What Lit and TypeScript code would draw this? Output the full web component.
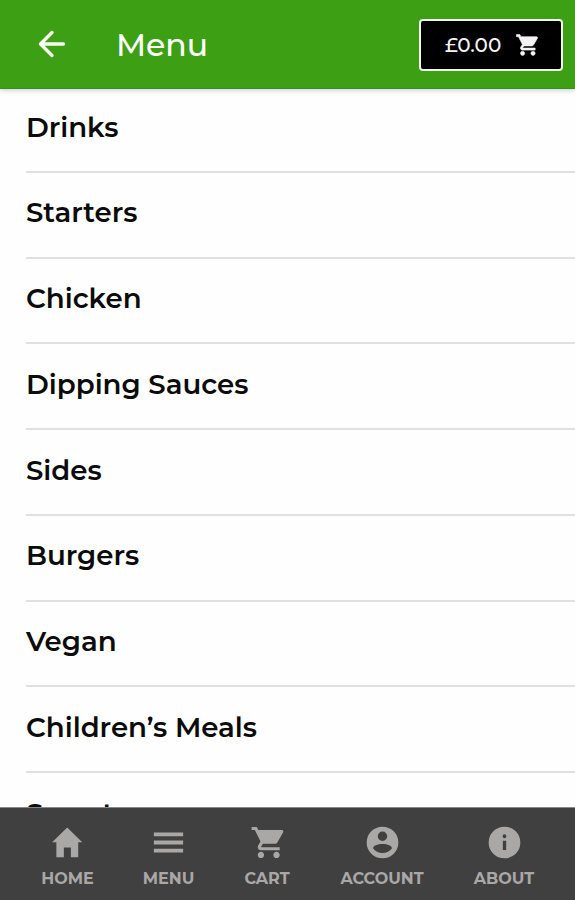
import { LitElement, html, css, svg } from "lit";
import { customElement } from "lit/decorators.js";

const cart = svg`<path d="M169.6 377.6c-22.882 0-41.6 18.718-41.6 41.601 0 22.882 18.718 41.6 41.6 41.6s41.601-18.718 41.601-41.6c-.001-22.884-18.72-41.601-41.601-41.601zM48 51.2v41.6h41.6l74.883 151.682-31.308 50.954c-3.118 5.2-5.2 12.482-5.2 19.765 0 27.85 19.025 41.6 44.825 41.6H416v-40H177.893c-3.118 0-5.2-2.082-5.2-5.2 0-1.036 2.207-5.2 2.207-5.2l20.782-32.8h154.954c15.601 0 29.128-8.317 36.4-21.836l74.882-128.8c1.237-2.461 2.082-6.246 2.082-10.4 0-11.446-9.364-19.765-20.8-19.765H135.364L115.6 51.2H48zm326.399 326.4c-22.882 0-41.6 18.718-41.6 41.601 0 22.882 18.718 41.6 41.6 41.6S416 442.082 416 419.2c0-22.883-18.719-41.6-41.601-41.6z"/>`;

const tabs = [
  { label: "HOME", icon: svg`<path d="M208 448V320h92v128h97V254H450L252 60 54 254h56v194z"/>` },
  { label: "MENU", icon: svg`<path d="M64 388h384v-50H64zM64 281h384v-50H64zM64 124v50h384v-50z"/>` },
  { label: "CART", icon: cart },
  {
    label: "ACCOUNT",
    icon: svg`<path fill-rule="evenodd" d="M256 48a208 208 0 1 0 0 416 208 208 0 1 0 0-416zM256 112a62 62 0 1 1 0 124 62 62 0 1 1 0-124zM256 276c66 0 124 24 124 56-28 38-70 62-124 62s-96-24-124-62c0-32 58-56 124-56z"/>`,
  },
  {
    label: "ABOUT",
    icon: svg`<path fill-rule="evenodd" d="M256 48a208 208 0 1 0 0 416 208 208 0 1 0 0-416zM234 232h44v124h-44zM256 149a25 25 0 1 1 0 50 25 25 0 1 1 0-50z"/>`,
  },
];

const categories = [
  "Drinks",
  "Starters",
  "Chicken",
  "Dipping Sauces",
  "Sides",
  "Burgers",
  "Vegan",
  "Children’s Meals",
  "Sweets",
];

@customElement("app-root")
export class AppRoot extends LitElement {
  static styles = css`
    :host {
      display: flex;
      flex-direction: column;
      height: 100vh;
      overflow: hidden;
      background: #fefefe;
      color: #0b0b0b;
      font-family: Montserrat, Inter, "Liberation Sans", sans-serif;
    }
    * { box-sizing: border-box; }
    svg { display: block; fill: currentColor; }
    .header {
      display: flex;
      align-items: center;
      flex: none;
      height: 89px;
      padding: 0 12px 0 38px;
      background: #3da014;
      border-bottom: 1px solid #38930f;
      box-shadow: 0 1px 5px rgba(70, 70, 130, 0.32);
      color: #fff;
      z-index: 1;
    }
    .back { width: 28px; height: 28px; fill: none; stroke: #f6fff0; stroke-width: 3.4; stroke-linecap: round; stroke-linejoin: round; }
    .title { margin: 2px auto 0 50px; font-size: 31.5px; font-weight: 500; line-height: 40px; }
    .basket {
      display: flex;
      align-items: center;
      justify-content: space-between;
      width: 144px;
      height: 52px;
      margin-top: 2px;
      padding: 0 21px 0 24px;
      border: 2px solid #f2f6ee;
      border-radius: 4px;
      background: #000;
      color: #f4f4f4;
      font-size: 20px;
      font-weight: 500;
    }
    .basket svg { width: 26px; height: 26px; stroke: currentColor; stroke-width: 12; }
    .list { flex: 1; min-height: 0; overflow: hidden; margin: -2px 0 0; padding: 0; list-style: none; }
    .row {
      height: 85.75px;
      margin-left: 26px;
      padding-top: 22.7px;
      border-bottom: 2px solid #e0e0e0;
      font-size: 27.6px;
      font-weight: 600;
      line-height: 34px;
      white-space: nowrap;
    }
    .tabs {
      display: grid;
      grid-template-columns: 51px 51px 46px 84px 60px;
      column-gap: 50px;
      justify-content: start;
      flex: none;
      height: 93px;
      padding: 15px 0 0 42px;
      border-top: 1px solid #888;
      background: #404040;
      color: #aaa7a7;
    }
    .tab { display: flex; flex-direction: column; align-items: center; }
    .tab svg { width: 39px; height: 39px; }
    .label { margin-top: 6px; font-size: 16px; font-weight: 700; line-height: 22px; white-space: nowrap; }
  `;

  render() {
    return html`
      <header class="header">
        <svg class="back" viewBox="0 0 28 28"><path d="M14 2.5 2.5 14 14 25.5M3 14H25.5" /></svg>
        <h1 class="title">Menu</h1>
        <div class="basket"><span>£0.00</span><svg viewBox="0 0 512 512">${cart}</svg></div>
      </header>
      <ul class="list">
        ${categories.map((name) => html`<li class="row">${name}</li>`)}
      </ul>
      <nav class="tabs">
        ${tabs.map((t) => html`<div class="tab"><svg viewBox="0 0 512 512">${t.icon}</svg><span class="label">${t.label}</span></div>`)}
      </nav>
    `;
  }
}
